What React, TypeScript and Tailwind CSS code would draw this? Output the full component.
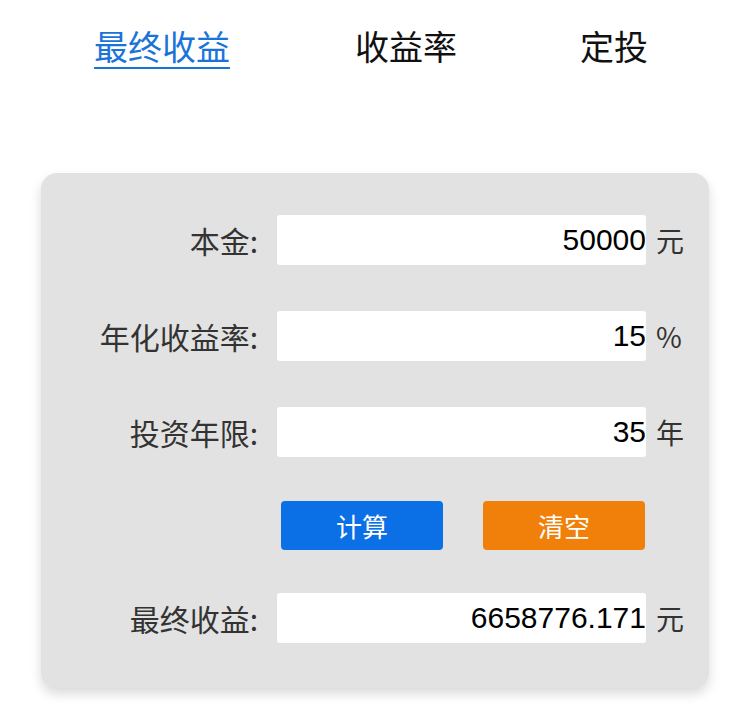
import { useState } from 'react';

const font = "font-['Noto_Sans_CJK_SC',sans-serif]";
const numFont = "font-['Liberation_Sans','Noto_Sans_CJK_SC',sans-serif]";

const tabs = ['最终收益', '收益率', '定投'];

function Row({ label, value, unit }: { label: string; value: string; unit: string }) {
  return (
    <div className="flex items-center h-[50px]">
      <div className={`w-[236px] pr-[19px] text-right text-[30px] text-[#333] ${font}`}>{label}:</div>
      <div className={`w-[369px] h-[50px] bg-white rounded-[3px] flex items-center justify-end text-[30px] text-black leading-none ${numFont}`}>
        {value}
      </div>
      <div className={`ml-[10px] text-[28px] text-[#333] ${font}`}>{unit}</div>
    </div>
  );
}

export default function App() {
  const [active, setActive] = useState(0);

  return (
    <div className={`w-[750px] h-[728px] bg-white ${font}`}>
      <div className="flex pt-[26px] pl-[94px] text-[34px] leading-[40px]">
        {tabs.map((t, i) => (
          <button
            key={t}
            onClick={() => setActive(i)}
            className={
              i === active
                ? 'text-[#1a74d8] border-b-2 border-[#1a74d8] pb-[1px] mr-[125px]'
                : i === 1
                ? 'text-[#111] mr-[123px] pb-[3px]'
                : 'text-[#111] pb-[3px]'
            }
          >
            {t}
          </button>
        ))}
      </div>

      <div className="mt-[104px] ml-[41px] w-[668px] h-[515px] bg-[#e2e2e2] rounded-[16px] shadow-[0_6px_12px_rgba(0,0,0,0.15)] pt-[42px]">
        <Row label="本金" value="50000" unit="元" />
        <div className="h-[46px]" />
        <Row label="年化收益率" value="15" unit="%" />
        <div className="h-[46px]" />
        <Row label="投资年限" value="35" unit="年" />
        <div className="flex pl-[240px] mt-[44px] gap-[40px]">
          <button className="w-[162px] h-[49px] rounded-[4px] bg-[#0b6fe6] text-white text-[26px]">计算</button>
          <button className="w-[162px] h-[49px] rounded-[4px] bg-[#f0800a] text-white text-[26px]">清空</button>
        </div>
        <div className="h-[43px]" />
        <Row label="最终收益" value="6658776.171" unit="元" />
      </div>
    </div>
  );
}
